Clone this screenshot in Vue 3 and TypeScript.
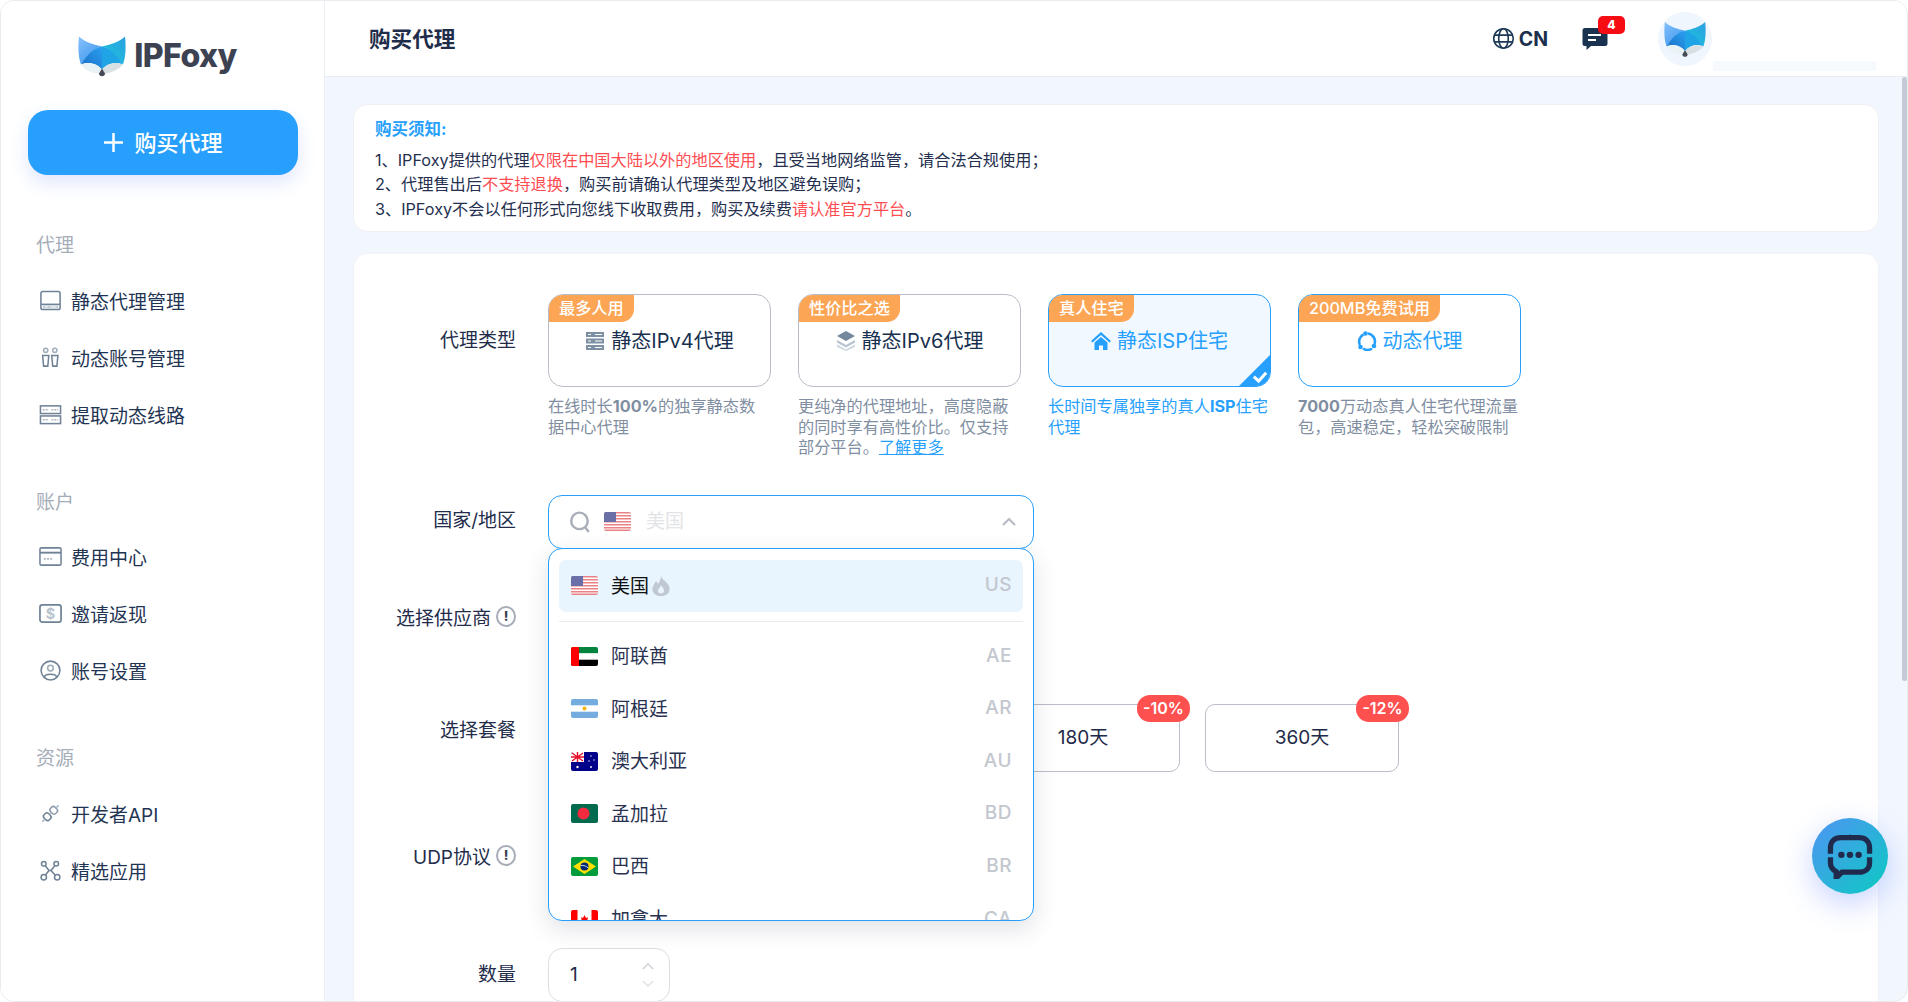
<script setup lang="ts">
interface NavItem { label: string; icon: string }
interface NavGroup { title: string; items: NavItem[] }
const groups: NavGroup[] = [
  { title: '代理', items: [
    { label: '静态代理管理', icon: 'drive' },
    { label: '动态账号管理', icon: 'users' },
    { label: '提取动态线路', icon: 'server' },
  ] },
  { title: '账户', items: [
    { label: '费用中心', icon: 'card' },
    { label: '邀请返现', icon: 'dollar' },
    { label: '账号设置', icon: 'user' },
  ] },
  { title: '资源', items: [
    { label: '开发者API', icon: 'plug' },
    { label: '精选应用', icon: 'apps' },
  ] },
]
const types = [
  { tag: '最多人用', title: '静态IPv4代理', icon: 'server', state: '', desc: ['在线时长', '100%', '的独享静态数据中心代理'], more: false },
  { tag: '性价比之选', title: '静态IPv6代理', icon: 'layers', state: '', desc: ['更纯净的代理地址，高度隐蔽的同时享有高性价比。仅支持部分平台。', '', ''], more: true },
  { tag: '真人住宅', title: '静态ISP住宅', icon: 'home', state: 'selected', desc: ['长时间专属独享的真人', 'ISP', '住宅代理'], more: false },
  { tag: '200MB免费试用', title: '动态代理', icon: 'cycle', state: 'active', desc: ['', '7000', '万动态真人住宅代理流量包，高速稳定，轻松突破限制'], more: false },
]
const plans = [
  { label: '30天', off: '' },
  { label: '90天', off: '' },
  { label: '180天', off: '-10%' },
  { label: '360天', off: '-12%' },
]
const countries = [
  { name: '阿联酋', code: 'AE' },
  { name: '阿根廷', code: 'AR' },
  { name: '澳大利亚', code: 'AU' },
  { name: '孟加拉', code: 'BD' },
  { name: '巴西', code: 'BR' },
  { name: '加拿大', code: 'CA' },
]
</script>

<template>
  <div class="app">
    <svg width="0" height="0" class="defs" aria-hidden="true">
      <defs>
        <linearGradient id="earL" x1="0" y1="0" x2="0.7" y2="1">
          <stop offset="0" stop-color="#86c2fc" />
          <stop offset="1" stop-color="#3f97ee" />
        </linearGradient>
        <linearGradient id="earR" x1="1" y1="0" x2="0.2" y2="1">
          <stop offset="0" stop-color="#2b9fe2" />
          <stop offset="1" stop-color="#1cc4da" />
        </linearGradient>
        <linearGradient id="domeL" x1="0" y1="1" x2="1" y2="0">
          <stop offset="0" stop-color="#1a6ec6" />
          <stop offset="1" stop-color="#2a9ff0" />
        </linearGradient>
        <symbol id="fox" viewBox="0 0 48 40">
          <path d="M1 0 C7 6 16 8 24 10 C15 13 8 20 3 28 C0 20 0 9 1 0Z" fill="url(#earL)" />
          <path d="M47 0 C41 6 32 8 24 10 C33 13 40 20 45 28 C48 20 48 9 47 0Z" fill="url(#earR)" />
          <path d="M24 10 C15 12 8 19 3 28 C10 25 18 26 24 33Z" fill="url(#domeL)" />
          <path d="M24 10 C33 12 40 19 45 28 C38 25 30 26 24 33Z" fill="#1fa5e6" />
          <path d="M3 28 C10 25 19 27 24 33 L21 37 C14 37 7 34 3 28Z" fill="#e9f3f6" />
          <path d="M45 28 C38 25 29 27 24 33 L27 37 C34 36 41 33 45 28Z" fill="#d9e0e4" />
          <path d="M24 32 L27 37 C27 40.500 21 40.500 21 37Z" fill="#454a56" />
        </symbol>
      </defs>
    </svg>

    <aside class="sidebar">
      <div class="brand">
        <svg class="brand-mark"><use href="#fox" /></svg>
        <span class="brand-name">IPFoxy</span>
      </div>
      <button class="buy" type="button">
        <svg class="buy-plus" viewBox="0 0 20 20"><path d="M10 1v18M1 10h18" stroke="#fff" stroke-width="2.4" /></svg>
        <span>购买代理</span>
      </button>
      <nav class="nav">
        <section v-for="g in groups" :key="g.title" class="nav-group">
          <h3 class="nav-title">{{ g.title }}</h3>
          <a v-for="it in g.items" :key="it.label" class="nav-item">
            <svg class="nav-icon" viewBox="0 0 24 24" fill="none" stroke="#6f8296" stroke-width="1.6">
              <template v-if="it.icon === 'drive'">
                <rect x="2" y="2.5" width="20" height="19" rx="2" />
                <path d="M2 16h20" />
                <path d="M4 17h16v3.5H4z" fill="#c6cfd9" stroke="none" />
                <path d="M6 18.7h3M12 18.7h6" stroke="#fff" stroke-width="1" />
              </template>
              <template v-else-if="it.icon === 'users'">
                <circle cx="7" cy="4.5" r="2.2" stroke="#a0adba" />
                <circle cx="16.5" cy="4.5" r="2.2" stroke="#a0adba" />
                <path d="M3.800 10h6.400l-1 11H4.800zM13.300 10h6.400l-1 11h-4.400z" />
              </template>
              <template v-else-if="it.icon === 'server'">
                <rect x="1.5" y="3" width="21" height="8" />
                <rect x="1.5" y="13.500" width="21" height="8" />
                <path d="M4 7h5M13 7h7M4 17.500h5M13 17.500h7" stroke="#aab6c2" stroke-width="1.6" stroke-dasharray="2 1" />
              </template>
              <template v-else-if="it.icon === 'card'">
                <rect x="1" y="3" width="22" height="18" rx="1.5" />
                <path d="M1 8h22" stroke-width="2" />
                <path d="M5 14.500h9" stroke="#a8b4c0" stroke-width="1.8" stroke-dasharray="2 1.4" />
              </template>
              <template v-else-if="it.icon === 'dollar'">
                <rect x="1" y="3" width="22" height="18" rx="2.5" stroke-width="1.8" />
                <text x="12" y="17.4" text-anchor="middle" class="dollar-text">$</text>
              </template>
              <template v-else-if="it.icon === 'user'">
                <circle cx="12" cy="12" r="9.8" />
                <circle cx="12" cy="9.5" r="3" stroke="#9dabb8" />
                <path d="M5.500 19c1-4 12-4 13 0" />
              </template>
              <template v-else-if="it.icon === 'plug'">
                <g transform="rotate(-45 12 12)">
                  <rect x="4" y="8.2" width="6.5" height="7.6" rx="2.4" />
                  <rect x="13.500" y="8.2" width="6.5" height="7.6" rx="2.4" stroke="#8c9cab" />
                  <path d="M10.500 12h3M0 12h4M20 12h4" stroke="#a9b5c1" />
                </g>
              </template>
              <template v-else>
                <circle cx="5" cy="5" r="2.4" /><circle cx="18" cy="5" r="2.4" />
                <circle cx="5" cy="19" r="2.8" /><circle cx="19" cy="19" r="2.8" />
                <path d="M6.500 7l4 5-4 5M16.500 7l-4 5 4.500 5M10.500 12h2" />
              </template>
            </svg>
            <span>{{ it.label }}</span>
          </a>
        </section>
      </nav>
    </aside>

    <div class="main">
      <header class="topbar">
        <h1 class="page-title">购买代理</h1>
        <div class="top-actions">
          <div class="lang">
            <svg class="globe" viewBox="0 0 24 24" fill="none" stroke="#1f3a56" stroke-width="1.7">
              <circle cx="12" cy="12" r="10.200" />
              <ellipse cx="12" cy="12" rx="5" ry="10.200" />
              <path d="M2.500 8.500h19M2.500 15.500h19" />
            </svg>
            <span>CN</span>
          </div>
          <div class="msg">
            <svg class="msg-icon" viewBox="0 0 26 24">
              <path d="M3 1h20a2.500 2.500 0 0 1 2.500 2.500v13A2.500 2.500 0 0 1 23 19H9l-4.500 4v-4H3a2.500 2.500 0 0 1-2.500-2.500v-13A2.500 2.500 0 0 1 3 1z" fill="#19324f" />
              <path d="M6 8h13M6 13h8" stroke="#fff" stroke-width="1.800" />
            </svg>
            <span class="msg-badge">4</span>
          </div>
          <div class="account">
            <div class="avatar"><svg class="avatar-fox"><use href="#fox" /></svg></div>
            <div class="account-name"></div>
          </div>
        </div>
      </header>

      <div class="content">
        <section class="notice">
          <h2 class="notice-title">购买须知:</h2>
          <p>1、IPFoxy提供的代理<em>仅限在中国大陆以外的地区使用</em>，且受当地网络监管，请合法合规使用；</p>
          <p>2、代理售出后<em>不支持退换</em>，购买前请确认代理类型及地区避免误购；</p>
          <p>3、IPFoxy不会以任何形式向您线下收取费用，购买及续费<em>请认准官方平台</em>。</p>
        </section>

        <section class="form-card">
          <div class="row row-type">
            <label class="label label-type">代理类型</label>
            <div class="types">
              <div v-for="t in types" :key="t.title" class="type" :class="t.state">
                <div class="type-box">
                  <span class="type-tag">{{ t.tag }}</span>
                  <div class="type-title">
                    <svg class="type-icon" viewBox="0 0 20 20">
                      <template v-if="t.icon === 'server'">
                        <path d="M1 1h18v5H1zM1 7.500h18v5H1zM1 14h18v5H1z" fill="#7d8fa3" />
                        <path d="M3 3.500h3M3 10h3M3 16.500h3M10 3.500h7M10 10h7M10 16.500h7" stroke="#fff" stroke-width="1" />
                      </template>
                      <template v-else-if="t.icon === 'layers'">
                        <path d="M10 0l9 5-9 5-9-5z" fill="#74899e" />
                        <path d="M1 9l9 5 9-5v2.500l-9 5-9-5z" fill="#b6c3d0" />
                        <path d="M1 13.500l9 5 9-5V16l-9 4-9-4z" fill="#cbd6e0" />
                      </template>
                      <template v-else-if="t.icon === 'home'">
                        <path d="M10 1L0 10l1.500 1.500L10 4l8.500 7.500L20 10z" fill="#279ffd" />
                        <path d="M3.500 11.500L10 6l6.500 5.500V19h-4.500v-4.500H8V19H3.500z" fill="#279ffd" />
                      </template>
                      <template v-else>
                        <g fill="none" stroke="#279ffd" stroke-width="2.600">
                          <path d="M6.500 3.500A8 8 0 0 0 2.800 14" />
                          <path d="M6 17.500a8 8 0 0 0 9 0" />
                          <path d="M11 2.500a8 8 0 0 1 6.500 10.500" />
                        </g>
                        <circle cx="8.500" cy="2.500" r="2.300" fill="#279ffd" />
                        <circle cx="3.500" cy="16" r="2.300" fill="#279ffd" />
                        <circle cx="17" cy="15" r="2.300" fill="#279ffd" />
                      </template>
                    </svg>
                    <span>{{ t.title }}</span>
                  </div>
                  <svg v-if="t.state === 'selected'" class="type-check" viewBox="0 0 24 24">
                    <path d="M24 0V24H0z" fill="#279ffd" />
                    <path d="M11.500 16.500l3.500 3.200 5.500-6" stroke="#fff" stroke-width="2.200" fill="none" />
                  </svg>
                </div>
                <p class="type-desc">{{ t.desc[0] }}<b>{{ t.desc[1] }}</b>{{ t.desc[2] }}<a v-if="t.more" class="more">了解更多</a></p>
              </div>
            </div>
          </div>

          <div class="row row-country">
            <label class="label">国家/地区</label>
            <div class="select-wrap">
              <div class="select">
                <svg class="search" viewBox="0 0 20 20" fill="none" stroke="#a9aeb9" stroke-width="2.200">
                  <circle cx="9.500" cy="9" r="7.500" /><path d="M14.500 14.500L18 19" />
                </svg>
                <svg class="flag" viewBox="0 0 27 19"><use href="#us" /></svg>
                <span class="select-value">美国</span>
                <svg class="chev" viewBox="0 0 14 9" fill="none" stroke="#b8bcc5" stroke-width="2.200"><path d="M1 8l6-6 6 6" /></svg>
              </div>
              <div class="dropdown">
                <div class="opt opt-active">
                  <svg class="flag" viewBox="0 0 27 19">
                    <g id="us">
                      <rect width="27" height="19" rx="2" fill="#fff" />
                      <path d="M0 0h27v1.500H0zM0 3h27v1.500H0zM0 6h27v1.500H0zM0 9h27v1.500H0zM0 12h27v1.500H0zM0 15h27v1.500H0zM0 17.500h27V19H0z" fill="#ea8184" />
                      <rect width="12" height="10" fill="#6a6fa8" />
                    </g>
                  </svg>
                  <span class="opt-name active-name">美国</span>
                  <svg class="hot" viewBox="0 0 18 20">
                    <path d="M9 0c1 3 3 4 5 6 2.500 2.500 4 5 3.500 8C17 18 13 20 9 20S1 18 .5 14C0 10 3 8 4 5c1 1 1.500 2 2 3 1.500-2 3-5 3-8z" fill="#bfc8d3" />
                    <path d="M9 9c.5 2 3 3 3 5.500A3 3 0 0 1 6 14.500C6 12.500 8.500 11.500 9 9z" fill="#eaf4fd" />
                  </svg>
                  <span class="opt-code">US</span>
                </div>
                <div class="divider"></div>
                <div v-for="c in countries" :key="c.code" class="opt">
                  <svg class="flag" viewBox="0 0 27 19">
                    <template v-if="c.code === 'AE'">
                      <rect width="27" height="6.400" fill="#00843d" /><rect y="6.400" width="27" height="6.300" fill="#fff" /><rect y="12.700" width="27" height="6.300" fill="#000" /><rect width="8" height="19" fill="#f00" />
                    </template>
                    <template v-else-if="c.code === 'AR'">
                      <rect width="27" height="19" fill="#74acdf" /><rect y="6.300" width="27" height="6.400" fill="#fff" /><circle cx="13.500" cy="9.500" r="2" fill="#f6b40e" />
                    </template>
                    <template v-else-if="c.code === 'AU'">
                      <rect width="27" height="19" fill="#00008b" /><rect width="13" height="10" fill="#fff" />
                      <path d="M6.500 0v10M0 5h13M1 1l11 8M12 1L1 9" stroke="#e8112d" stroke-width="1.400" />
                      <circle cx="6.500" cy="15" r="1.200" fill="#fff" /><circle cx="20" cy="4" r=".7" fill="#fff" /><circle cx="23" cy="8" r=".7" fill="#fff" /><circle cx="18" cy="9" r=".7" fill="#fff" /><circle cx="20" cy="15" r=".9" fill="#fff" />
                    </template>
                    <template v-else-if="c.code === 'BD'">
                      <rect width="27" height="19" fill="#006a4e" /><circle cx="12.500" cy="9.500" r="6" fill="#f42a41" />
                    </template>
                    <template v-else-if="c.code === 'BR'">
                      <rect width="27" height="19" fill="#009b3a" /><path d="M13.500 2L25 9.500 13.500 17 2 9.500z" fill="#fedf00" /><circle cx="13.500" cy="9.500" r="4" fill="#002776" /><path d="M9.700 8.500c3-.5 5.500.5 7.500 2.500" stroke="#fff" stroke-width=".8" fill="none" />
                    </template>
                    <template v-else>
                      <rect width="27" height="19" fill="#fff" /><rect width="6.500" height="19" fill="#f00" /><rect x="20.500" width="6.500" height="19" fill="#f00" /><path d="M13.500 5l1.500 3 2-.8-.8 3.500 1.300.3-2.500 2h-3l-2.500-2 1.300-.3-.8-3.500 2 .8z" fill="#f00" />
                    </template>
                  </svg>
                  <span class="opt-name">{{ c.name }}</span>
                  <span class="opt-code">{{ c.code }}</span>
                </div>
              </div>
            </div>
          </div>

          <div class="row row-supplier">
            <label class="label">选择供应商<i class="info">!</i></label>
          </div>

          <div class="row row-plan">
            <label class="label label-plan">选择套餐</label>
            <div class="plans">
              <div v-for="p in plans" :key="p.label" class="plan">
                <span class="plan-text">{{ p.label }}</span>
                <span v-if="p.off" class="plan-off">{{ p.off }}</span>
              </div>
            </div>
          </div>

          <div class="row row-udp">
            <label class="label">UDP协议<i class="info">!</i></label>
          </div>

          <div class="row row-qty">
            <label class="label">数量</label>
            <div class="qty">
              <span>1</span>
              <div class="qty-arrows">
                <svg viewBox="0 0 14 9" fill="none" stroke="#d3d6dc" stroke-width="2"><path d="M1 8l6-6 6 6" /></svg>
                <svg viewBox="0 0 14 9" fill="none" stroke="#e1e3e7" stroke-width="2"><path d="M1 1l6 6 6-6" /></svg>
              </div>
            </div>
          </div>
        </section>
      </div>

      <div class="scroll-thumb"></div>
      <button class="chat" type="button" aria-label="chat">
        <svg viewBox="0 0 40 40" class="chat-svg" fill="none">
          <path d="M3 18V13C3 7 7 4 12 4h16c5 0 9 3 9 9v5M37 21v5c0 5-4 8-9 8H13l-5 5v-5.500C5 32 3 29 3 26v-5" stroke="#1f2a4d" stroke-width="4.600" />
          <path d="M17.500 4l2.500-3 2.500 3z" fill="#1f2a4d" />
          <circle cx="12.500" cy="19" r="2.800" fill="#1f2a4d" /><circle cx="20" cy="19" r="2.800" fill="#1f2a4d" /><circle cx="27.500" cy="19" r="2.800" fill="#1f2a4d" />
        </svg>
      </button>
    </div>
  </div>
</template>

<style>
html, body { margin: 0; height: 100%; background: #fff; overflow: hidden; }
</style>

<style scoped>
.app {
  display: flex;
  height: 1002px;
  box-sizing: border-box;
  overflow: hidden;
  border: 1px solid #e9ebee;
  border-radius: 14px;
  font-family: Inter, "Noto Sans CJK SC", sans-serif;
  font-size: 19px;
  color: #1e2b4a;
  background: #f2f7fe;
}
.defs { position: absolute; }
.sidebar {
  width: 324px;
  flex: none;
  box-sizing: border-box;
  padding: 34px 27px 0;
  background: #fff;
  border-right: 1px solid #eceff3;
}
.brand { display: flex; align-items: center; justify-content: center; gap: 8px; padding-right: 10px; height: 42px; }
.brand-mark { width: 48px; height: 41px; }
.brand-name { font-size: 32px; font-weight: 800; color: #3d4252; letter-spacing: -.6px; line-height: 42px; }
.buy {
  display: flex;
  align-items: center;
  justify-content: center;
  gap: 10px;
  width: 270px;
  height: 65px;
  margin-top: 33px;
  border: 0;
  border-radius: 20px;
  background: #279ffd;
  color: #fff;
  font: 500 22px Inter, "Noto Sans CJK SC", sans-serif;
  box-shadow: 0 8px 18px rgba(80, 120, 240, .18);
}
.buy span { padding-bottom: 3px; }
.buy-plus { width: 21px; height: 21px; }
.nav { margin-top: 57px; }
.nav-group { margin-bottom: 46px; }
.nav-title { margin: 0 0 11.500px 8px; height: 28px; font-size: 19px; line-height: 28px; font-weight: 400; color: #a5adb8; }
.nav-item { display: flex; align-items: center; height: 57px; padding-left: 11px; gap: 9px; color: #1f3553; white-space: nowrap; }
.nav-icon { width: 23px; height: 23px; flex: none; }
.dollar-text { font: 700 15px Inter, sans-serif; fill: #b9c3cd; stroke: none; }

.main { position: relative; flex: 1; min-width: 0; display: flex; flex-direction: column; }
.topbar {
  display: flex;
  align-items: center;
  justify-content: space-between;
  height: 76px;
  flex: none;
  box-sizing: border-box;
  padding-left: 44px;
  background: #fff;
  border-bottom: 1px solid #e9edf2;
}
.page-title { margin: 0 0 2px; font-size: 21.600px; font-weight: 600; color: #1f2d4b; }
.top-actions { display: flex; align-items: center; height: 100%; }
.lang { display: flex; align-items: center; gap: 4px; font-weight: 700; font-size: 19.500px; color: #1c2f4c; }
.globe { width: 23px; height: 23px; }
.msg { position: relative; margin-left: 34px; width: 26px; height: 24px; margin-top: 0; }
.msg-icon { display: block; width: 26px; height: 24px; }
.msg-badge {
  position: absolute;
  left: 16px;
  top: -11px;
  width: 27px;
  height: 18px;
  border-radius: 5px;
  background: #f60d13;
  color: #fff;
  font-size: 12px;
  font-weight: 800;
  line-height: 17px;
  text-align: center;
}
.account { position: relative; width: 219px; margin-left: 50px; height: 100%; margin-right: 30px; }
.avatar {
  position: absolute;
  left: 0;
  top: 11px;
  width: 54px;
  height: 54px;
  border-radius: 50%;
  background: #eff6fe;
  display: flex;
  align-items: center;
  justify-content: center;
}
.avatar-fox { width: 42px; height: 35px; }
.account-name { position: absolute; left: 55px; top: 60px; width: 163px; height: 10px; background: #f6faff; }

.content { flex: 1; min-height: 0; overflow: hidden; padding: 27px 28px 0 28px; }
.notice {
  height: 128px;
  box-sizing: border-box;
  padding: 11px 21px 0;
  background: #fff;
  border: 1px solid #eef0f4;
  border-radius: 14px;
  font-size: 16.200px;
  line-height: 24.300px;
  color: #252f4f;
}
.notice-title { margin: 0 0 6px; font-size: 16.500px; font-weight: 700; line-height: 26px; color: #279ffd; }
.notice p { margin: 0; white-space: nowrap; }
.notice em { font-style: normal; color: #ff4d52; }

.form-card {
  margin-top: 21px;
  padding: 40px 0 0;
  height: 780px;
  background: #fff;
  border-radius: 14px;
  border: 1px solid #f0f2f6;
  box-sizing: border-box;
}
.row { display: flex; }
.label {
  width: 162px;
  flex: none;
  margin-right: 32px;
  box-sizing: border-box;
  display: flex;
  align-items: center;
  justify-content: flex-end;
  padding-bottom: 5px;
  color: #232c4a;
  white-space: nowrap;
}
.label-type { height: 92px; padding-bottom: 3px; }
.types { display: flex; gap: 27px; }
.type { width: 223px; }
.type-box {
  position: relative;
  height: 93px;
  box-sizing: border-box;
  overflow: hidden;
  border: 1px solid #babdc9;
  border-radius: 15px;
  padding-top: 32px;
  color: #17304f;
}
.type-tag {
  position: absolute;
  left: 0;
  top: 0;
  height: 27px;
  padding: 0 10px;
  border-bottom-right-radius: 13px;
  background: #fba555;
  color: #fff;
  font-size: 16.200px;
  font-weight: 500;
  line-height: 26px;
  white-space: nowrap;
}
.type-title { display: flex; align-items: center; justify-content: center; gap: 6px; font-size: 20px; line-height: 28px; }
.type-icon { width: 20px; height: 20px; flex: none; }
.type-check { position: absolute; right: -1px; bottom: -1px; width: 33px; height: 33px; }
.type-desc { margin: 9px 0 0; font-size: 16.200px; line-height: 20.600px; color: #7f8ea1; }
.type-desc b { font-weight: 700; }
.more { color: #279ffd; text-decoration: underline; }
.type.selected .type-box { border-color: #279ffd; background: #f1f8ff; color: #279ffd; }
.type.selected .type-desc { color: #279ffd; }
.type.active .type-box { border-color: #279ffd; color: #279ffd; }

.row-country { margin-top: 37px; height: 53px; }
.row-country .label { height: 53px; }
.select-wrap { position: relative; width: 486px; z-index: 2; }
.select {
  display: flex;
  align-items: center;
  height: 54px;
  box-sizing: border-box;
  padding: 0 17px 0 20px;
  background: #fff;
  border: 1.500px solid #279ffd;
  border-radius: 14px;
}
.search { width: 22px; height: 22px; flex: none; }
.select > .flag { margin-left: 13px; }
.select-value { margin-left: 15px; padding-bottom: 4px; color: #e3e4e7; flex: 1; }
.chev { width: 14px; height: 9px; }
.flag { width: 27px; height: 19px; flex: none; border-radius: 2px; display: block; }
.dropdown {
  position: absolute;
  left: 0;
  right: 0;
  top: 53px;
  height: 373px;
  overflow: hidden;
  box-sizing: border-box;
  padding: 11px 10px 0;
  background: #fff;
  border: 1.500px solid #279ffd;
  border-radius: 14px;
  box-shadow: 0 8px 24px rgba(40, 50, 80, .14);
}
.opt {
  display: flex;
  align-items: center;
  height: 52.600px;
  padding: 0 11px 0 12px;
  box-sizing: border-box;
  color: #2a3251;
  flex: none;
}
.opt .flag { margin-right: 13px; }
.opt-name { padding-bottom: 3px; }
.opt-active { background: #e8f4fe; border-radius: 7px; height: 52px; }
.active-name { color: #111; }
.hot { width: 18px; height: 20px; margin-left: 3px; }
.opt-code { margin-left: auto; color: #c3c7cf; font-weight: 500; font-size: 19px; letter-spacing: .5px; padding-bottom: 2px; }
.divider { height: 1px; background: #e8eaed; margin: 9px 0 8px; }

.row-supplier { margin-top: 44px; height: 54px; }
.row-supplier .label { height: 54px; }
.info {
  margin-left: 5px;
  width: 16px;
  height: 17px;
  border: 2.500px solid #a9adb9;
  border-radius: 50%;
  color: #3a3f50;
  font: 800 13px/17px Inter, sans-serif;
  text-align: center;
  flex: none;
}
.row-plan { margin-top: 58px; height: 68px; }
.label-plan { height: 52px; padding-bottom: 3px; }
.plans { display: flex; gap: 25px; }
.plan {
  position: relative;
  width: 194px;
  height: 68px;
  box-sizing: border-box;
  border: 1px solid #bbbdc7;
  border-radius: 10px;
  display: flex;
  align-items: center;
  justify-content: center;
  color: #222a48;
}
.plan-text { padding-bottom: 5px; }
.plan-off {
  position: absolute;
  right: -11px;
  top: -10px;
  width: 53px;
  height: 27px;
  border-radius: 13px;
  background: #ff5050;
  color: #fff;
  font-size: 16px;
  font-weight: 600;
  line-height: 27px;
  text-align: center;
}
.row-udp { margin-top: 59px; height: 54px; }
.row-udp .label { height: 54px; }
.row-qty { margin-top: 63px; height: 54px; }
.row-qty .label { height: 54px; }
.qty {
  width: 122px;
  height: 54px;
  box-sizing: border-box;
  border: 1.500px solid #dcdee3;
  border-radius: 14px;
  padding: 0 15px 0 21px;
  display: flex;
  align-items: center;
  justify-content: space-between;
  color: #222a48;
}
.qty-arrows { display: flex; flex-direction: column; gap: 10px; }
.qty-arrows svg { display: block; width: 12px; height: 8px; }

.scroll-thumb { position: absolute; right: 0; top: 76px; width: 5px; height: 604px; background: #c5cbd6; border-radius: 3px; }
.chat {
  position: absolute;
  left: 1487px;
  top: 817px;
  width: 76px;
  height: 76px;
  padding: 0;
  border: 0;
  border-radius: 50%;
  background: linear-gradient(135deg, #4f94f4, #0ccac2);
  box-shadow: 0 10px 30px rgba(70, 110, 255, .3);
  display: flex;
  align-items: center;
  justify-content: center;
}
.chat-svg { width: 46px; height: 46px; }
</style>
